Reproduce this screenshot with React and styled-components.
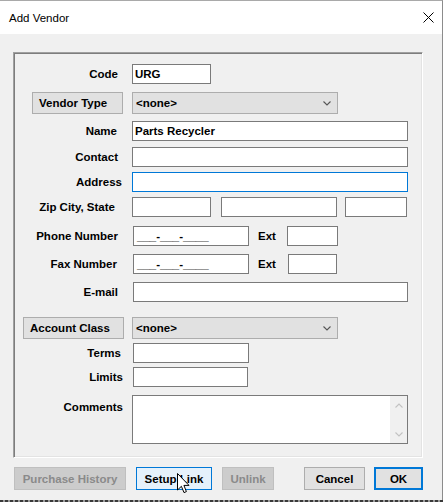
import React from 'react';
import styled, { createGlobalStyle } from 'styled-components';

const GlobalStyle = createGlobalStyle`
  html, body {
    margin: 0;
    padding: 0;
  }
  body {
    width: 445px;
    height: 502px;
    overflow: hidden;
    background: #ffffff;
    font-family: "Liberation Sans", Arial, sans-serif;
  }
  * {
    box-sizing: border-box;
  }
`;

const Screen = styled.div`
  position: relative;
  width: 445px;
  height: 502px;
  background: #ffffff;
  display: flex;
  flex-direction: column;
`;

const Window = styled.div`
  width: 443px;
  height: 500px;
  border-top: 1px solid #a9a9a9;
  border-right: 1px solid #8c8c8c;
  display: flex;
  flex-direction: column;
`;

const TitleBar = styled.div`
  height: 33px;
  background: #ffffff;
  display: flex;
  align-items: center;
  padding-left: 9px;
`;

const Title = styled.span`
  font-size: 11.5px;
  color: #000;
  margin-top: 1px;
`;

const CloseBox = styled.div`
  margin-left: auto;
  width: 28px;
  height: 33px;
  display: flex;
  align-items: center;
  justify-content: center;
`;

const Body = styled.div`
  flex: 1;
  background: #f0f0f0;
  padding: 18px 0 0 13px;
`;

const GroupBox = styled.div`
  width: 410px;
  height: 406px;
  border: 1px solid;
  border-color: #a0a0a0 #ffffff #ffffff #a0a0a0;
  box-shadow: inset 1px 1px 0 #7d7d7d, inset -1px -1px 0 #e3e3e3;
  display: flex;
  flex-direction: column;
`;

const Row = styled.div`
  display: flex;
  align-items: ${(p) => (p.top ? 'flex-start' : 'center')};
  margin-top: ${(p) => p.mt}px;
  height: ${(p) => p.h || 20}px;
`;

const Label = styled.div`
  width: 118px;
  padding-right: ${(p) => p.pr ?? 14}px;
  padding-top: ${(p) => p.pt || 0}px;
  text-align: right;
  font-size: 11.5px;
  font-weight: bold;
  color: #000;
  line-height: 13px;
  white-space: nowrap;
`;

const LabelCell = styled.div`
  width: 118px;
  padding-right: ${(p) => p.pr}px;
  display: flex;
  justify-content: flex-end;
`;

const Field = styled.div`
  width: ${(p) => p.w}px;
  height: ${(p) => p.h || 20}px;
  margin-left: ${(p) => p.ml || 0}px;
  background: #ffffff;
  border: 1px solid ${(p) => (p.focused ? '#0078d7' : '#7a7a7a')};
  padding-left: 2px;
  font-size: 11.5px;
  font-weight: bold;
  color: #000;
  display: flex;
  align-items: center;
  position: relative;
  white-space: pre;
`;

const Mask = styled.span`
  padding-left: 1px;
`;

const Scroll = styled.div`
  position: absolute;
  top: 0;
  right: 0;
  width: 17px;
  height: 100%;
  background: #f0f0f0;
  display: flex;
  flex-direction: column;
  justify-content: space-between;
  align-items: center;
  padding: 7px 0 6px;
`;

const Select = styled.div`
  width: 206px;
  height: 22px;
  background: #e1e1e1;
  border: 1px solid #adadad;
  padding: 0 6px 0 3px;
  display: flex;
  align-items: center;
  justify-content: space-between;
  font-size: 11.5px;
  font-weight: bold;
  color: #000;
`;

const Button = styled.div`
  width: ${(p) => p.w}px;
  height: ${(p) => p.h || 22}px;
  margin-left: ${(p) => p.ml || 0}px;
  display: flex;
  align-items: center;
  justify-content: ${(p) => (p.left ? 'flex-start' : 'center')};
  padding-left: ${(p) => (p.left ? 6 : 0)}px;
  font-size: 11.5px;
  font-weight: bold;
  white-space: nowrap;
  background: ${(p) =>
    p.disabled ? '#cccccc' : p.hot ? '#e5f1fb' : '#e1e1e1'};
  border: ${(p) => (p.isDefault ? 2 : 1)}px solid
    ${(p) =>
      p.disabled ? '#bfbfbf' : p.hot || p.isDefault ? '#0078d7' : '#adadad'};
  color: ${(p) => (p.disabled ? '#8a8a8a' : '#000')};
`;

const ExtLabel = styled.span`
  margin-left: 9px;
  width: 29px;
  font-size: 11.5px;
  font-weight: bold;
  color: #000;
`;

const ButtonBar = styled.div`
  display: flex;
  margin-top: 9px;
  margin-left: 1px;
`;

const Cursor = styled.svg`
  position: absolute;
  left: 177px;
  top: 473px;
`;

const Strip = styled.div`
  height: 2px;
  width: 443px;
  background: repeating-linear-gradient(90deg, #3a3a3a 0 3px, #9a9a9a 3px 5px);
`;

const Chevron = ({ color = '#555' }) => (
  <svg width="8" height="5" viewBox="0 0 8 5">
    <path d="M0.5 0.5 L4 4 L7.5 0.5" fill="none" stroke={color} strokeWidth="1.1" />
  </svg>
);

const ChevronUp = () => (
  <svg width="8" height="5" viewBox="0 0 8 5">
    <path d="M0.5 4.5 L4 1 L7.5 4.5" fill="none" stroke="#c2c2c2" strokeWidth="1.1" />
  </svg>
);

const phoneMask = '___-___-____';

export default function App() {
  return (
    <Screen>
      <GlobalStyle />
      <Window>
        <TitleBar>
          <Title>Add Vendor</Title>
          <CloseBox>
            <svg width="11" height="11" viewBox="0 0 11 11">
              <path d="M0.5 0.5 L10.5 10.5 M10.5 0.5 L0.5 10.5" stroke="#000" strokeWidth="1" />
            </svg>
          </CloseBox>
        </TitleBar>
        <Body>
          <GroupBox>
            <Row mt={11}>
              <Label pr={14}>Code</Label>
              <Field w={79}>URG</Field>
            </Row>
            <Row mt={8} h={22}>
              <LabelCell pr={9}>
                <Button w={91} left>Vendor Type</Button>
              </LabelCell>
              <Select>
                <span>&lt;none&gt;</span>
                <Chevron />
              </Select>
            </Row>
            <Row mt={7}>
              <Label pr={15}>Name</Label>
              <Field w={276}>Parts Recycler</Field>
            </Row>
            <Row mt={6}>
              <Label pr={14}>Contact</Label>
              <Field w={276} />
            </Row>
            <Row mt={5}>
              <Label pr={10}>Address</Label>
              <Field w={276} focused />
            </Row>
            <Row mt={5}>
              <Label pr={17}>Zip City, State</Label>
              <Field w={79} />
              <Field w={116} ml={10} />
              <Field w={62} ml={8} />
            </Row>
            <Row mt={9}>
              <Label pr={14}>Phone Number</Label>
              <Field w={116} ml={1}>
                <Mask>{phoneMask}</Mask>
              </Field>
              <ExtLabel>Ext</ExtLabel>
              <Field w={51} />
            </Row>
            <Row mt={8}>
              <Label pr={15}>Fax Number</Label>
              <Field w={116} ml={1}>
                <Mask>{phoneMask}</Mask>
              </Field>
              <ExtLabel>Ext</ExtLabel>
              <Field w={49} ml={1} />
            </Row>
            <Row mt={8}>
              <Label pr={14}>E-mail</Label>
              <Field w={275} ml={1} />
            </Row>
            <Row mt={15} h={22}>
              <LabelCell pr={8}>
                <Button w={101} left>Account Class</Button>
              </LabelCell>
              <Select>
                <span>&lt;none&gt;</span>
                <Chevron />
              </Select>
            </Row>
            <Row mt={4}>
              <Label pr={11}>Terms</Label>
              <Field w={116} ml={1} />
            </Row>
            <Row mt={4}>
              <Label pr={9}>Limits</Label>
              <Field w={115} ml={1} />
            </Row>
            <Row mt={8} h={49} top>
              <Label pr={9} pt={6}>Comments</Label>
              <Field w={276} h={49}>
                <Scroll>
                  <ChevronUp />
                  <Chevron color="#c2c2c2" />
                </Scroll>
              </Field>
            </Row>
          </GroupBox>
          <ButtonBar>
            <Button w={112} h={23} disabled>Purchase History</Button>
            <Button w={76} h={23} ml={10} hot>Setup Link</Button>
            <Button w={52} h={23} ml={10} disabled>Unlink</Button>
            <Button w={61} h={23} ml={30}>Cancel</Button>
            <Button w={49} h={23} ml={9} isDefault>OK</Button>
          </ButtonBar>
        </Body>
      </Window>
      <Strip />
      <Cursor width="13" height="22" viewBox="0 0 13 22">
        <path
          d="M0.5 0.5 L0.5 17 L4.4 13.3 L7 19.6 L9.4 18.6 L6.9 12.4 L12 12.4 Z"
          fill="#ffffff"
          stroke="#000000"
          strokeWidth="1"
          strokeLinejoin="miter"
        />
      </Cursor>
    </Screen>
  );
}
